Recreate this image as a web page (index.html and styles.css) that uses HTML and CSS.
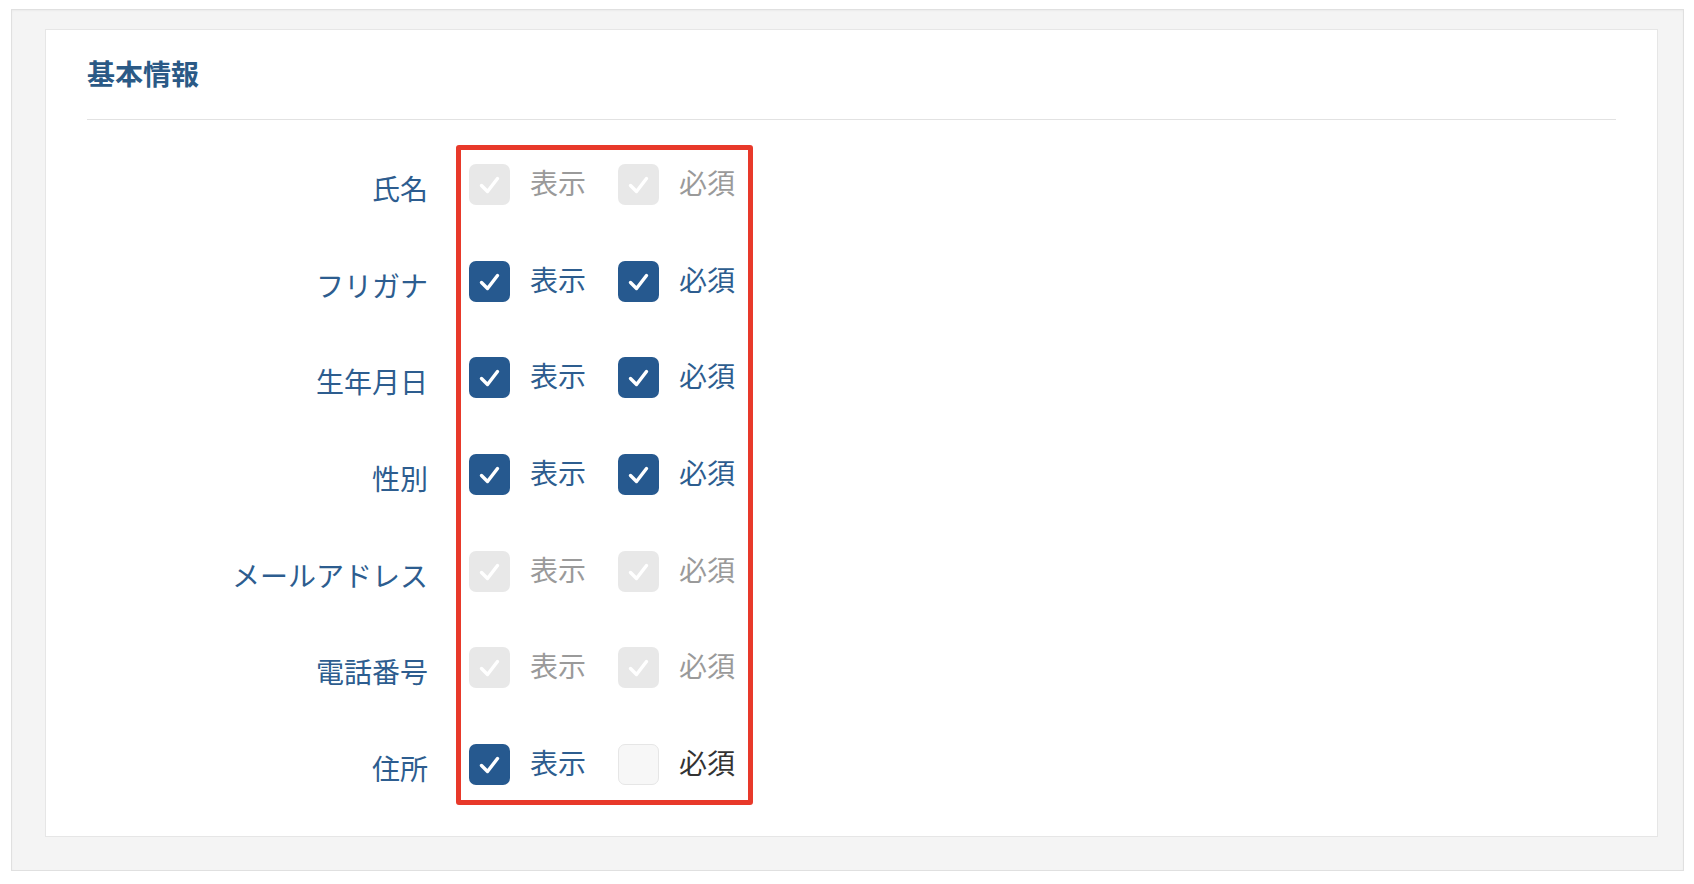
FILE: index.html
```html
<!DOCTYPE html>
<html lang="ja">
<head>
<meta charset="utf-8">
<title>基本情報</title>
<link rel="stylesheet" href="styles.css">
</head>
<body>
<div class="panel">
  <div class="card">
    <h2 class="title">基本情報</h2>
    <div class="divider"></div>
    <div class="form">
      <div class="labels">
        <div class="label">氏名</div>
        <div class="label">フリガナ</div>
        <div class="label">生年月日</div>
        <div class="label">性別</div>
        <div class="label">メールアドレス</div>
        <div class="label">電話番号</div>
        <div class="label">住所</div>
      </div>
      <div class="options">
        <div class="row">
          <span class="box disabled"><svg viewBox="0 0 41 41"><path d="M12.5 21.5 L18.5 27.5 L28.5 14.5"/></svg></span><span class="text muted">表示</span>
          <span class="box disabled"><svg viewBox="0 0 41 41"><path d="M12.5 21.5 L18.5 27.5 L28.5 14.5"/></svg></span><span class="text muted">必須</span>
        </div>
        <div class="row">
          <span class="box checked"><svg viewBox="0 0 41 41"><path d="M12.5 21.5 L18.5 27.5 L28.5 14.5"/></svg></span><span class="text blue">表示</span>
          <span class="box checked"><svg viewBox="0 0 41 41"><path d="M12.5 21.5 L18.5 27.5 L28.5 14.5"/></svg></span><span class="text blue">必須</span>
        </div>
        <div class="row">
          <span class="box checked"><svg viewBox="0 0 41 41"><path d="M12.5 21.5 L18.5 27.5 L28.5 14.5"/></svg></span><span class="text blue">表示</span>
          <span class="box checked"><svg viewBox="0 0 41 41"><path d="M12.5 21.5 L18.5 27.5 L28.5 14.5"/></svg></span><span class="text blue">必須</span>
        </div>
        <div class="row">
          <span class="box checked"><svg viewBox="0 0 41 41"><path d="M12.5 21.5 L18.5 27.5 L28.5 14.5"/></svg></span><span class="text blue">表示</span>
          <span class="box checked"><svg viewBox="0 0 41 41"><path d="M12.5 21.5 L18.5 27.5 L28.5 14.5"/></svg></span><span class="text blue">必須</span>
        </div>
        <div class="row">
          <span class="box disabled"><svg viewBox="0 0 41 41"><path d="M12.5 21.5 L18.5 27.5 L28.5 14.5"/></svg></span><span class="text muted">表示</span>
          <span class="box disabled"><svg viewBox="0 0 41 41"><path d="M12.5 21.5 L18.5 27.5 L28.5 14.5"/></svg></span><span class="text muted">必須</span>
        </div>
        <div class="row">
          <span class="box disabled"><svg viewBox="0 0 41 41"><path d="M12.5 21.5 L18.5 27.5 L28.5 14.5"/></svg></span><span class="text muted">表示</span>
          <span class="box disabled"><svg viewBox="0 0 41 41"><path d="M12.5 21.5 L18.5 27.5 L28.5 14.5"/></svg></span><span class="text muted">必須</span>
        </div>
        <div class="row">
          <span class="box checked"><svg viewBox="0 0 41 41"><path d="M12.5 21.5 L18.5 27.5 L28.5 14.5"/></svg></span><span class="text blue">表示</span>
          <span class="box empty"></span><span class="text dark">必須</span>
        </div>
      </div>
    </div>
  </div>
</div>
</body>
</html>
```

FILE: styles.css
```css
* { box-sizing: border-box; }

html, body {
  margin: 0;
  padding: 0;
  background: #ffffff;
}

body {
  font-family: "Noto Sans CJK JP", "Noto Sans", sans-serif;
  padding: 9px 10px 0 11px;
}

.panel {
  width: 1673px;
  height: 862px;
  background: #f4f4f4;
  border: 1px solid #e0e0e0;
  box-shadow: inset 0 1px 2px rgba(0, 0, 0, 0.04);
  padding: 19px 25px 33px 33px;
}

.card {
  height: 808px;
  background: #ffffff;
  border: 1px solid #e6e6e6;
  padding: 0 41px;
}

.title {
  margin: 0;
  padding-top: 23px;
  font-size: 28px;
  line-height: 40px;
  font-weight: 700;
  color: #2b5a86;
}

.divider {
  margin-top: 26px;
  height: 1px;
  background: #e2e2e2;
}

.form {
  display: flex;
  margin-top: 25px;
}

.labels {
  width: 341px;
  margin-right: 28px;
  padding-top: 19px;
  display: flex;
  flex-direction: column;
  gap: 55.67px;
}

.label {
  height: 41px;
  padding-top: 4px;
  line-height: 41px;
  font-size: 28px;
  text-align: right;
  color: #2d5d8f;
  white-space: nowrap;
}

.options {
  border: 5px solid #e8392a;
  border-radius: 3px;
  padding: 14px 13px 15px 8px;
  display: flex;
  flex-direction: column;
  gap: 55.67px;
}

.row {
  display: flex;
  align-items: center;
  height: 41px;
}

.box {
  width: 41px;
  height: 41px;
  border-radius: 7px;
  flex: none;
  display: flex;
}

.box svg {
  width: 41px;
  height: 41px;
}

.box path {
  fill: none;
  stroke: #ffffff;
  stroke-width: 3.4;
  stroke-linecap: round;
  stroke-linejoin: round;
}

.box.checked {
  background: #26598f;
}

.box.disabled {
  background: #e8e8e8;
}

.box.empty {
  background: #f7f7f7;
  border: 1.5px solid #e6e6e6;
}

.text {
  font-size: 28px;
  line-height: 41px;
  padding-bottom: 4px;
  margin-left: 20px;
  white-space: nowrap;
}

.text + .box {
  margin-left: 32px;
}

.text.blue { color: #2d5d8f; }
.text.muted { color: #9a9a9a; }
.text.dark { color: #333333; }
```
